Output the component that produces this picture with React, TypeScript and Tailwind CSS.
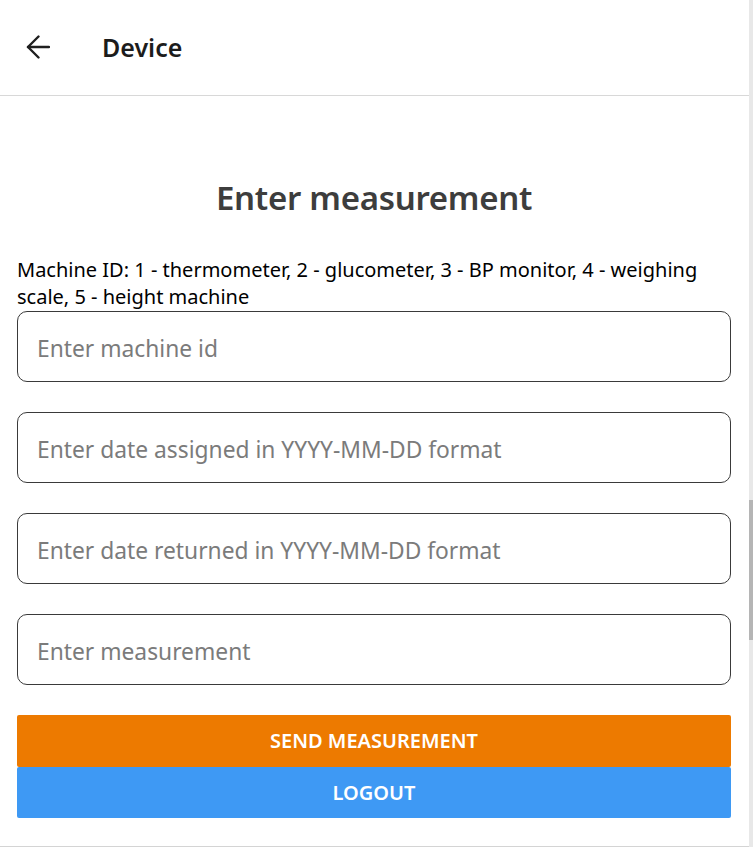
const fields = [
  "Enter machine id",
  "Enter date assigned in YYYY-MM-DD format",
  "Enter date returned in YYYY-MM-DD format",
  "Enter measurement",
];

export default function App() {
  return (
    <div
      className="w-[753px] h-[850px] flex bg-white overflow-hidden"
      style={{ fontFamily: '"Noto Sans", "Open Sans", sans-serif' }}
    >
      <div className="w-[749px] h-[847px] flex flex-col border-b border-[#d4d4d4]">
        {/* Header */}
        <div className="h-[96px] shrink-0 flex items-center border-b border-[#d8d8d8]">
          <svg
            className="ml-[26px] mt-[-2px]"
            width="24"
            height="24"
            viewBox="0 0 24 24"
            fill="none"
            stroke="#1f1f1f"
            strokeWidth="2.4"
            strokeLinecap="round"
            strokeLinejoin="round"
          >
            <path d="M2 12h21" />
            <path d="M12.5 1.5 2 12l10.5 10.5" />
          </svg>
          <p className="ml-[52px] text-[25px] font-semibold text-[#1c1c1c] leading-none">Device</p>
        </div>

        {/* Form */}
        <div className="flex flex-col px-[17px] pr-[18px]">
          <h1 className="mt-[80px] text-center text-[33px] font-semibold text-[#3d3d3d] leading-[44px] tracking-[-0.3px]">
            Enter measurement
          </h1>
          <p className="mt-[36px] text-[20px] leading-[27px] text-black">
            Machine ID: 1 - thermometer, 2 - glucometer, 3 - BP monitor, 4 - weighing scale, 5 - height machine
          </p>
          <div className="flex flex-col gap-[30px] mt-[1px]">
            {fields.map((f) => (
              <input
                key={f}
                placeholder={f}
                className="h-[71px] w-full rounded-[10px] border border-[#3a3a3a] px-[19px] pt-[3px] text-[22.8px] text-black placeholder:text-[#7b7b7b] outline-none"
              />
            ))}
          </div>
          <button className="mt-[30px] h-[52px] w-full rounded-[2px] bg-[#ed7a00] text-white text-[20px] font-semibold uppercase">
            Send Measurement
          </button>
          <button className="h-[51px] w-full rounded-[2px] bg-[#3e99f4] text-white text-[20px] font-semibold uppercase">
            Logout
          </button>
        </div>
      </div>
      {/* scrollbar gutter */}
      <div className="w-[4px] h-[847px] bg-[#e8e8e8] flex flex-col">
        <div className="h-[500px]" />
        <div className="h-[140px] bg-[#b5b5b5]" />
      </div>
    </div>
  );
}
